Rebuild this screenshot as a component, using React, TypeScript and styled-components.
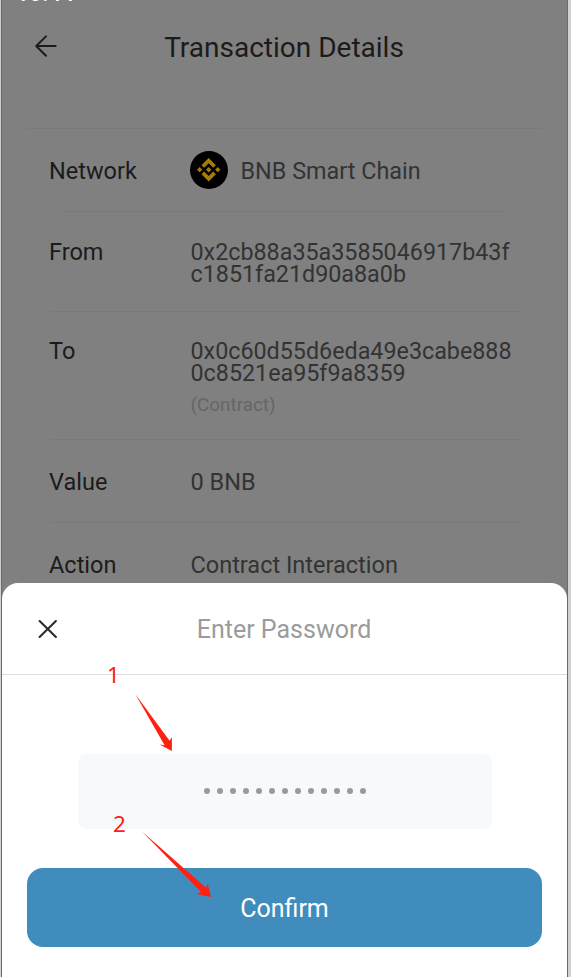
import React from 'react';
import styled, { createGlobalStyle } from 'styled-components';

const GlobalStyle = createGlobalStyle`
  * { box-sizing: border-box; }
  body { margin: 0; background: #d1d1d1; font-family: Roboto, sans-serif; }
`;

const Phone = styled.main`
  position: relative;
  width: 567px;
  height: 977px;
  margin-left: 1px;
  border: solid #6a6a6a;
  border-width: 0 1px;
  background: #808080;
  overflow: hidden;
`;

const Details = styled.section`
  height: 583px;
  overflow: hidden;
`;

const StatusTime = styled.div`
  height: 2px;
  padding-left: 14px;
  display: flex;
  align-items: flex-end;
  font-size: 23px;
  font-weight: 500;
  line-height: 17px;
  color: #fff;
`;

const TopBar = styled.header`
  display: grid;
  grid-template-columns: 84px 1fr 84px;
  align-items: center;
  height: 126px;
  padding-bottom: 36px;
`;

const BackIcon = styled.svg`
  display: block;
  width: 24px;
  height: 24px;
  margin: -2px 0 0 32px;
`;

const Title = styled.h1`
  margin: 2px 1px 0 0;
  font-size: 28px;
  font-weight: 400;
  line-height: 34px;
  text-align: center;
  color: #1b1b1b;
`;

const Divider = styled.div<{ $left: number; $right: number }>`
  height: 1px;
  margin: 0 ${p => p.$right}px 0 ${p => p.$left}px;
  background: #7a7a7a;
`;

const Row = styled.div<{ $height: number; $top: number }>`
  display: grid;
  grid-template-columns: 141.5px 1fr;
  height: ${p => p.$height}px;
  padding: ${p => p.$top}px 40px 0 47px;
  font-size: 23.5px;
  line-height: 22px;
`;

const Label = styled.div`
  color: #1b1b1b;
`;

const Value = styled.div`
  color: #333;
`;

const Hash = styled.div`
  font-size: 23.3px;
  white-space: nowrap;
`;

const Note = styled.div`
  margin-top: 10px;
  font-size: 18.9px;
  color: #666;
`;

const Chain = styled.div`
  display: flex;
  align-items: center;
  gap: 12.5px;
  height: 38px;
  margin: -8px 0 0 -0.5px;
  font-size: 23.4px;
  line-height: 22px;
`;

const CoinBadge = styled.span`
  display: flex;
  align-items: center;
  justify-content: center;
  width: 38px;
  height: 38px;
  margin-top: -2px;
  border-radius: 50%;
  background: #000;
`;

const Sheet = styled.section`
  height: 394px;
  border-radius: 16px 16px 0 0;
  background: #fff;
`;

const SheetHeader = styled.header`
  display: grid;
  grid-template-columns: 84px 1fr 84px;
  align-items: center;
  height: 92px;
  border-bottom: 1px solid #dcdcdc;
`;

const CloseIcon = styled.svg`
  display: block;
  width: 20px;
  height: 20px;
  margin-left: 35.5px;
`;

const SheetTitle = styled.h2`
  margin: 2px 1px 0 0;
  font-size: 25px;
  font-weight: 400;
  line-height: 30px;
  text-align: center;
  color: #9b9b9b;
`;

const PasswordField = styled.div`
  display: flex;
  align-items: center;
  justify-content: center;
  gap: 7.08px;
  width: 414px;
  height: 75px;
  margin: 79px 0 0 76px;
  padding-bottom: 1px;
  border-radius: 8px;
  background: #f6fafd;
`;

const Dot = styled.span`
  width: 6px;
  height: 6px;
  border-radius: 50%;
  background: #999;
`;

const ConfirmButton = styled.button`
  display: block;
  width: 515px;
  height: 78.5px;
  margin: 39px 0 0 25px;
  padding: 4px 0 0;
  border: 0;
  border-radius: 16px;
  background: #408cbd;
  color: #fff;
  font: 25px/30px Roboto, sans-serif;
`;

const Annotations = styled.div`
  position: absolute;
  inset: 0;
  pointer-events: none;
`;

const Arrows = styled.svg`
  position: absolute;
  left: -2px;
  top: 0;
  fill: #ff2012;
`;

const Step = styled.span<{ $x: number; $y: number }>`
  position: absolute;
  left: ${p => p.$x}px;
  top: ${p => p.$y}px;
  font: 22.5px/24px 'Noto Sans', sans-serif;
  color: #ff2012;
`;

const BnbLogo = () => (
  <svg width="23.4" height="23.4" viewBox="0 0 126.61 126.61" fill="#a67b08">
    <path d="M38.73 53.2 63.3 28.62 87.89 53.21 102.19 38.91 63.3 0 24.43 38.9Z" />
    <path d="M0 63.31 14.3 49.01 28.6 63.31 14.3 77.61Z" />
    <path d="M38.73 73.41 63.3 98 87.89 73.4 102.19 87.69 63.3 126.61 24.41 87.71Z" />
    <path d="M98 63.31 112.31 49.01 126.61 63.31 112.31 77.62Z" />
    <path d="M77.83 63.3 63.3 48.78 48.77 63.31 63.3 77.83Z" />
  </svg>
);

export default function App() {
  return (
    <>
      <GlobalStyle />
      <Phone>
        <Details>
          <StatusTime>10:44</StatusTime>
          <TopBar>
            <BackIcon viewBox="0 0 24 24" fill="none" stroke="#1b1b1b" strokeWidth="2" strokeLinecap="round" strokeLinejoin="round">
              <path d="M21.6 12H2.2M12 2.4 2.2 12 12 21.8" />
            </BackIcon>
            <Title>Transaction Details</Title>
          </TopBar>
          <Divider $left={25} $right={24} />
          <Row $height={82} $top={31}>
            <Label>Network</Label>
            <Value>
              <Chain>
                <CoinBadge><BnbLogo /></CoinBadge>
                BNB Smart Chain
              </Chain>
            </Value>
          </Row>
          <Divider $left={62} $right={63} />
          <Row $height={99} $top={29}>
            <Label>From</Label>
            <Value>
              <Hash>0x2cb88a35a3585046917b43f</Hash>
              <Hash>c1851fa21d90a8a0b</Hash>
            </Value>
          </Row>
          <Divider $left={47} $right={46} />
          <Row $height={127} $top={28}>
            <Label>To</Label>
            <Value>
              <Hash>0x0c60d55d6eda49e3cabe888</Hash>
              <Hash>0c8521ea95f9a8359</Hash>
              <Note>(Contract)</Note>
            </Value>
          </Row>
          <Divider $left={47} $right={46} />
          <Row $height={82} $top={31}>
            <Label>Value</Label>
            <Value>0 BNB</Value>
          </Row>
          <Divider $left={47} $right={46} />
          <Row $height={60} $top={31}>
            <Label>Action</Label>
            <Value>Contract Interaction</Value>
          </Row>
        </Details>
        <Sheet>
          <SheetHeader>
            <CloseIcon viewBox="0 0 20 20" fill="none" stroke="#2b2b2b" strokeWidth="2.1" strokeLinecap="round">
              <path d="M1.6 2 17.9 18M17.9 2 1.6 18" />
            </CloseIcon>
            <SheetTitle>Enter Password</SheetTitle>
          </SheetHeader>
          <PasswordField>
            {Array.from({ length: 13 }, (_, i) => <Dot key={i} />)}
          </PasswordField>
          <ConfirmButton>Confirm</ConfirmButton>
        </Sheet>
        <Annotations>
          <Arrows width="571" height="977">
            <path d="M135.2 694 169.6 740.8 171.9 737.3V751L159.6 744.6 164.6 745.2Z" />
            <path d="M142 831.5 206 887.8 207.7 884 211 897 197.2 894.2 201 892Z" />
          </Arrows>
          <Step $x={105} $y={663}>1</Step>
          <Step $x={111} $y={812}>2</Step>
        </Annotations>
      </Phone>
    </>
  );
}
